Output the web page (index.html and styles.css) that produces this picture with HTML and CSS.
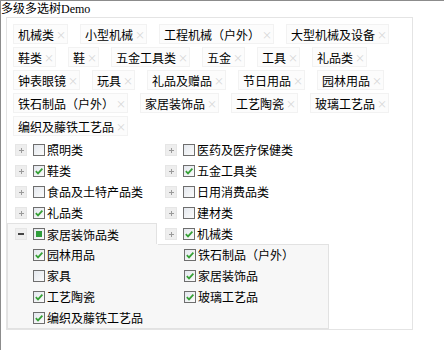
FILE: index.html
```html
<!DOCTYPE html>
<html lang="zh">
<head>
    <meta charset="utf-8">
    <title>多级多选树Demo</title>
    <link rel="stylesheet" href="styles.css">
</head>
<body>

<div class="demo-title">多级多选树Demo</div>

<div class="mtree">
    <div class="mtree-tags">
        <span class="mtree-tag">机械类<i class="mtree-tag-x">×</i></span>
        <span class="mtree-tag">小型机械<i class="mtree-tag-x">×</i></span>
        <span class="mtree-tag">工程机械（户外）<i class="mtree-tag-x">×</i></span>
        <span class="mtree-tag">大型机械及设备<i class="mtree-tag-x">×</i></span>
        <span class="mtree-tag">鞋类<i class="mtree-tag-x">×</i></span>
        <span class="mtree-tag">鞋<i class="mtree-tag-x">×</i></span>
        <span class="mtree-tag">五金工具类<i class="mtree-tag-x">×</i></span>
        <span class="mtree-tag">五金<i class="mtree-tag-x">×</i></span>
        <span class="mtree-tag">工具<i class="mtree-tag-x">×</i></span>
        <span class="mtree-tag">礼品类<i class="mtree-tag-x">×</i></span>
        <span class="mtree-tag">钟表眼镜<i class="mtree-tag-x">×</i></span>
        <span class="mtree-tag">玩具<i class="mtree-tag-x">×</i></span>
        <span class="mtree-tag">礼品及赠品<i class="mtree-tag-x">×</i></span>
        <span class="mtree-tag">节日用品<i class="mtree-tag-x">×</i></span>
        <span class="mtree-tag">园林用品<i class="mtree-tag-x">×</i></span>
        <span class="mtree-tag">铁石制品（户外）<i class="mtree-tag-x">×</i></span>
        <span class="mtree-tag">家居装饰品<i class="mtree-tag-x">×</i></span>
        <span class="mtree-tag">工艺陶瓷<i class="mtree-tag-x">×</i></span>
        <span class="mtree-tag">玻璃工艺品<i class="mtree-tag-x">×</i></span>
        <span class="mtree-tag">编织及藤铁工艺品<i class="mtree-tag-x">×</i></span>
    </div>

    <div class="mtree-nodes">
        <div class="mtree-node"><span class="mtree-toggle"></span><span class="mtree-cb"></span>照明类</div>
        <div class="mtree-node"><span class="mtree-toggle"></span><span class="mtree-cb"></span>医药及医疗保健类</div>
        <div class="mtree-node"><span class="mtree-toggle"></span><span class="mtree-cb on"><svg viewBox="0 0 10 10"><polyline points="1.8,5.2 4,7.4 8.4,2.6"/></svg></span>鞋类</div>
        <div class="mtree-node"><span class="mtree-toggle"></span><span class="mtree-cb on"><svg viewBox="0 0 10 10"><polyline points="1.8,5.2 4,7.4 8.4,2.6"/></svg></span>五金工具类</div>
        <div class="mtree-node"><span class="mtree-toggle"></span><span class="mtree-cb"></span>食品及土特产品类</div>
        <div class="mtree-node"><span class="mtree-toggle"></span><span class="mtree-cb"></span>日用消费品类</div>
        <div class="mtree-node"><span class="mtree-toggle"></span><span class="mtree-cb on"><svg viewBox="0 0 10 10"><polyline points="1.8,5.2 4,7.4 8.4,2.6"/></svg></span>礼品类</div>
        <div class="mtree-node"><span class="mtree-toggle"></span><span class="mtree-cb"></span>建材类</div>
        <div class="mtree-node open"><span class="mtree-toggle"></span><span class="mtree-cb part"></span>家居装饰品类</div>
        <div class="mtree-node"><span class="mtree-toggle"></span><span class="mtree-cb on"><svg viewBox="0 0 10 10"><polyline points="1.8,5.2 4,7.4 8.4,2.6"/></svg></span>机械类</div>

        <div class="mtree-children">
            <div class="mtree-leaf"><span class="mtree-cb on"><svg viewBox="0 0 10 10"><polyline points="1.8,5.2 4,7.4 8.4,2.6"/></svg></span>园林用品</div>
            <div class="mtree-leaf"><span class="mtree-cb on"><svg viewBox="0 0 10 10"><polyline points="1.8,5.2 4,7.4 8.4,2.6"/></svg></span>铁石制品（户外）</div>
            <div class="mtree-leaf"><span class="mtree-cb"></span>家具</div>
            <div class="mtree-leaf"><span class="mtree-cb on"><svg viewBox="0 0 10 10"><polyline points="1.8,5.2 4,7.4 8.4,2.6"/></svg></span>家居装饰品</div>
            <div class="mtree-leaf"><span class="mtree-cb on"><svg viewBox="0 0 10 10"><polyline points="1.8,5.2 4,7.4 8.4,2.6"/></svg></span>工艺陶瓷</div>
            <div class="mtree-leaf"><span class="mtree-cb on"><svg viewBox="0 0 10 10"><polyline points="1.8,5.2 4,7.4 8.4,2.6"/></svg></span>玻璃工艺品</div>
            <div class="mtree-leaf"><span class="mtree-cb on"><svg viewBox="0 0 10 10"><polyline points="1.8,5.2 4,7.4 8.4,2.6"/></svg></span>编织及藤铁工艺品</div>
        </div>
    </div>
</div>

</body>
</html>
```

FILE: styles.css
```css
body {
    margin:0;
    border-top:1px solid #8c8c8c;
    border-left:1px solid #8c8c8c;
    min-height:350px;
    box-sizing:border-box;
    background:#fff;
    color:#000;
    font:12px "Liberation Serif","Noto Sans CJK SC",serif;
}

.demo-title {
    height:16px;
    line-height:17px;
    white-space:nowrap;
}

/* multi-level checkbox tree */
.mtree {
    width:407px;
    margin-left:5px;
    box-sizing:border-box;
    border:1px solid #e4e4e4;
    font-family:"Noto Sans CJK SC",sans-serif;
}

.mtree-tags {
    display:flex;
    flex-wrap:wrap;
    padding:6px 4px 0 6px;
}

.mtree-tag {
    display:flex;
    align-items:center;
    height:20px;
    box-sizing:border-box;
    margin:0 12px 3px 0;
    padding-left:4px;
    padding-right:3px;
    border:1px solid #f2f2f2;
    background:#fcfcfc;
    white-space:nowrap;
}

.mtree-tag-x {
    width:8px;
    margin-left:2px;
    font-style:normal;
    font-size:10px;
    color:#d6d6d6;
    text-align:center;
}

.mtree-nodes {
    display:grid;
    grid-template-columns:150px 150px;
}

.mtree-node, .mtree-leaf {
    display:flex;
    align-items:center;
    height:21px;
    box-sizing:border-box;
    white-space:nowrap;
}

.mtree-node {
    padding-left:7px;
    border:1px solid transparent;
}

.mtree-node.open {
    border-color:#e2e2e2;
    border-bottom:0;
    background:#f7f7f7;
}

.mtree-toggle {
    position:relative;
    width:12px;
    height:12px;
    box-sizing:border-box;
    margin-right:6px;
    background:#eeeeee;
    border:1px solid #e6e6e6;
}

.mtree-toggle:before, .mtree-toggle:after {
    content:"";
    position:absolute;
    background:#9a9a9a;
}

.mtree-toggle:before {
    left:3px;
    top:5px;
    width:5px;
    height:1px;
}

.mtree-toggle:after {
    left:5px;
    top:3px;
    width:1px;
    height:5px;
}

.open .mtree-toggle:before {
    left:2px;
    top:4px;
    width:6px;
    height:2px;
    background:#444;
}

.open .mtree-toggle:after {
    display:none;
}

.mtree-cb {
    display:flex;
    align-items:center;
    justify-content:center;
    width:12px;
    height:12px;
    box-sizing:border-box;
    margin-right:2px;
    border:1px solid #6e6e6e;
    background:linear-gradient(135deg,#e4e8ee,#fbfbfb);
}

.mtree-cb svg {
    width:10px;
    height:10px;
    fill:none;
    stroke:#35a035;
    stroke-width:1.7;
}

.mtree-cb.part:after {
    content:"";
    width:6px;
    height:6px;
    background:#2f9d3a;
}

.mtree-children {
    grid-column:1 / -1;
    display:grid;
    grid-template-columns:150px 150px;
    width:322px;
    box-sizing:border-box;
    border:1px solid #e2e2e2;
    border-top:0;
    background:linear-gradient(#e2e2e2,#e2e2e2) 150px 0 / 100% 1px no-repeat, #f7f7f7;
}

.mtree-leaf {
    padding-left:25px;
}

.mtree-leaf:nth-child(even) {
    padding-left:26px;
}
```
